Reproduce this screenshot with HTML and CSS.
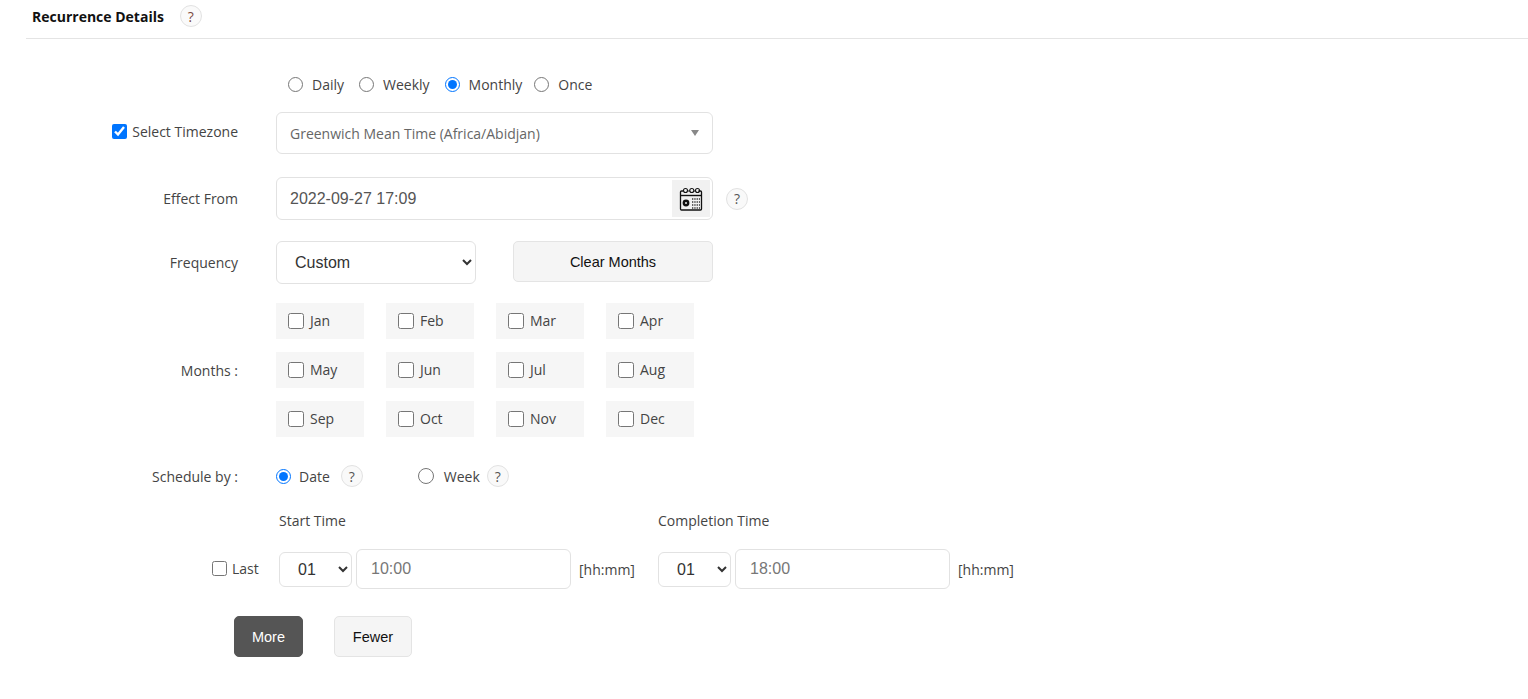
FILE: index.html
```html
<!DOCTYPE html>
<html lang="en">
<head>
<meta charset="utf-8">
<title>Recurrence Details</title>
<link rel="stylesheet" href="styles.css">
</head>
<body>
<header class="section-head">
  <h2 class="section-title">Recurrence Details</h2>
  <span class="help help-head">?</span>
</header>
<form class="form">
  <div class="row row-type">
    <div class="label"></div>
    <div class="field radios">
      <label class="opt"><input type="radio" name="type"><span>Daily</span></label>
      <label class="opt"><input type="radio" name="type"><span>Weekly</span></label>
      <label class="opt"><input type="radio" name="type" checked><span>Monthly</span></label>
      <label class="opt"><input type="radio" name="type"><span>Once</span></label>
    </div>
  </div>
  <div class="row row-tz">
    <div class="label"><label class="opt opt-tz"><input type="checkbox" checked><span>Select Timezone</span></label></div>
    <div class="field">
      <div class="combo"><span>Greenwich Mean Time (Africa/Abidjan)</span><i class="caret"></i></div>
    </div>
  </div>
  <div class="row row-from">
    <div class="label">Effect From</div>
    <div class="field">
      <div class="date">
        <span class="date-value">2022-09-27 17:09</span>
        <span class="cal">
          <svg width="26" height="26" viewBox="0 0 26 26" fill="none" stroke="#111">
            <path d="M5.5 5H3.5a1 1 0 0 0-1 1v17a1 1 0 0 0 1 1h19a1 1 0 0 0 1-1V6a1 1 0 0 0-1-1h-2" stroke-width="1.3"/>
            <path d="M2.5 9.5h21" stroke-width="1.4"/>
            <path d="M9.5 5h2.5M16 5h1.5" stroke-width="1.2"/>
            <circle cx="7.5" cy="4.5" r="2" stroke-width="1.1"/>
            <circle cx="13.8" cy="4.5" r="2" stroke-width="1.1"/>
            <circle cx="19.5" cy="4.5" r="2" stroke-width="1.1"/>
            <circle cx="8" cy="17" r="3.4" fill="#111" stroke="none"/>
            <path d="M7 16l2 2M9 16l-2 2" stroke="#ddd" stroke-width=".8"/>
            <path d="M14 13h8M14 16h8M14 19h8M14 22h8" stroke="#333" stroke-width="1.3" stroke-dasharray="1.3 1"/>
          </svg>
        </span>
      </div>
      <span class="help help-from">?</span>
    </div>
  </div>
  <div class="row row-freq">
    <div class="label">Frequency</div>
    <div class="field">
      <select class="select select-freq"><option>Custom</option></select>
      <button type="button" class="btn btn-clear">Clear Months</button>
    </div>
  </div>
  <div class="row row-months">
    <div class="label">Months :</div>
    <div class="months">
      <label class="month"><input type="checkbox"><span>Jan</span></label>
      <label class="month"><input type="checkbox"><span>Feb</span></label>
      <label class="month"><input type="checkbox"><span>Mar</span></label>
      <label class="month"><input type="checkbox"><span>Apr</span></label>
      <label class="month"><input type="checkbox"><span>May</span></label>
      <label class="month"><input type="checkbox"><span>Jun</span></label>
      <label class="month"><input type="checkbox"><span>Jul</span></label>
      <label class="month"><input type="checkbox"><span>Aug</span></label>
      <label class="month"><input type="checkbox"><span>Sep</span></label>
      <label class="month"><input type="checkbox"><span>Oct</span></label>
      <label class="month"><input type="checkbox"><span>Nov</span></label>
      <label class="month"><input type="checkbox"><span>Dec</span></label>
    </div>
  </div>
  <div class="row row-sched">
    <div class="label">Schedule by :</div>
    <div class="field">
      <label class="opt opt-date"><input type="radio" name="by" checked><span>Date</span></label>
      <span class="help">?</span>
      <label class="opt opt-week"><input type="radio" name="by"><span>Week</span></label>
      <span class="help">?</span>
    </div>
  </div>
  <div class="times-head">
    <span class="time-title">Start Time</span>
    <span class="time-title">Completion Time</span>
  </div>
  <div class="times">
    <label class="opt opt-last"><input type="checkbox"><span>Last</span></label>
    <div class="time-group">
      <select class="select select-day"><option>01</option></select>
      <div class="time-input">10:00</div>
      <span class="hint">[hh:mm]</span>
    </div>
    <div class="time-group">
      <select class="select select-day"><option>01</option></select>
      <div class="time-input">18:00</div>
      <span class="hint">[hh:mm]</span>
    </div>
  </div>
  <div class="actions">
    <button type="button" class="btn btn-more">More</button>
    <button type="button" class="btn btn-fewer">Fewer</button>
  </div>
</form>
</body>
</html>
```
FILE: styles.css
```css
* { box-sizing: border-box; }
html, body { margin: 0; padding: 0; background: #fff; }
body {
  width: 1528px;
  height: 699px;
  overflow: hidden;
  font-family: "Open Sans", "Liberation Sans", sans-serif;
  font-size: 14px;
  color: #444;
}
.section-head {
  display: flex;
  align-items: center;
  height: 39px;
  margin-left: 26px;
  padding: 0 0 6px 6px;
  border-bottom: 1px solid #e4e4e4;
}
.section-title {
  margin: 0;
  font-size: 14px;
  font-weight: 700;
  color: #111;
}
.help {
  display: inline-flex;
  align-items: center;
  justify-content: center;
  width: 22px;
  height: 22px;
  border: 1px solid #e2e2e2;
  border-radius: 50%;
  background: #f9f9f9;
  font-size: 14px;
  color: #555;
}
.help-head { margin-left: 16px; background: #fafafa; color: #7a4a42; }
.form { display: block; }
.row { display: flex; }
.label {
  width: 238px;
  flex: none;
  text-align: right;
  color: #444;
}
.field {
  display: flex;
  align-items: center;
  margin-left: 38px;
}
.opt { display: inline-flex; align-items: center; }
.opt input { margin: 0; width: 15px; height: 15px; flex: none; }
.row-type { margin-top: 33px; height: 24px; align-items: center; }
.radios { margin-left: 50px; }
.radios .opt { margin-right: 15px; }
.radios .opt span { margin-left: 9px; }
.radios .opt:nth-child(3) { margin-right: 12px; }
.row-tz { margin-top: 16px; align-items: center; height: 42px; }
.opt-tz { justify-content: flex-end; transform: none; color: #444; }
.opt-tz span { margin-left: 5px; }
.opt-tz { margin-top: -2px; }
.combo {
  display: flex;
  align-items: center;
  justify-content: space-between;
  width: 437px;
  height: 42px;
  padding: 0 13px 0 13px;
  border: 1px solid #e2e2e2;
  border-radius: 6px;
  color: #666;
}
.caret {
  width: 0;
  height: 0;
  border-left: 4px solid transparent;
  border-right: 4px solid transparent;
  border-top: 6px solid #888;
  margin-top: -1px;
}
.row-from { margin-top: 23px; height: 43px; align-items: center; }
.date {
  display: flex;
  align-items: center;
  justify-content: space-between;
  width: 437px;
  height: 43px;
  padding: 0 2px 0 13px;
  border: 1px solid #e2e2e2;
  border-radius: 6px;
}
.date-value {
  font-family: "Liberation Sans", Arial, sans-serif;
  font-size: 16px;
  color: #555;
}
.cal {
  display: flex;
  align-items: center;
  justify-content: center;
  width: 38px;
  height: 37px;
  background: #f1f1f1;
  margin-top: 0;
}
.help-from { margin-left: 13px; }
.row-freq { margin-top: 21px; height: 43px; align-items: center; }
.row-freq .label { margin-top: -1px; }
.select {
  font-family: "Liberation Sans", Arial, sans-serif;
  font-size: 16px;
  color: #333;
  background-color: #fff;
  border: 1px solid #e2e2e2;
  border-radius: 6px;
}
.select-freq {
  width: 200px;
  height: 43px;
  padding: 0 14px;
}
.btn {
  font-family: "Liberation Sans", Arial, sans-serif;
  font-size: 14.5px;
  color: #111;
  background: #f5f5f5;
  border: 1px solid #e4e4e4;
  border-radius: 5px;
  padding: 0;
}
.btn-clear {
  width: 200px;
  height: 41px;
  margin: -2px 0 0 37px;
}
.row-months { margin-top: 19px; align-items: center; }
.months {
  display: grid;
  grid-template-columns: repeat(4, 88px);
  grid-auto-rows: 36px;
  column-gap: 22px;
  row-gap: 13px;
  margin-left: 38px;
}
.month {
  display: flex;
  align-items: center;
  padding-left: 12px;
  background: #f6f6f6;
  color: #444;
}
.month input { margin: 0; width: 16px; height: 16px; flex: none; }
.month span { margin: -2px 0 0 6px; }
.row-sched { margin-top: 26px; height: 26px; align-items: center; }
.opt-date input { width: 15px; height: 15px; }
.opt-date span { margin-left: 8px; }
.opt-date { margin-right: 11px; }
.opt-week { margin: 0 7px 0 55px; }
.opt-week input { width: 16px; height: 16px; }
.opt-week span { margin-left: 10px; }
.times-head {
  display: flex;
  margin-top: 22px;
  padding-left: 279px;
  height: 20px;
  line-height: 20px;
}
.time-title { width: 379px; color: #444; }
.times {
  display: flex;
  align-items: center;
  margin-top: 18px;
  height: 40px;
  padding-left: 212px;
}
.opt-last { width: 67px; margin-top: -2px; }
.opt-last span { margin-left: 5px; }
.time-group { display: flex; align-items: center; width: 379px; }
.select-day {
  width: 73px;
  height: 35px;
  padding: 0 10px 0 14px;
}
.time-input {
  display: flex;
  align-items: center;
  width: 215px;
  height: 40px;
  margin-left: 4px;
  padding-left: 14px;
  border: 1px solid #e2e2e2;
  border-radius: 6px;
  font-family: "Liberation Sans", Arial, sans-serif;
  font-size: 16px;
  color: #777;
}
.hint { margin-left: 8px; color: #444; }
.actions {
  display: flex;
  margin-top: 27px;
  padding-left: 234px;
}
.btn-more {
  width: 69px;
  height: 41px;
  background: #555;
  border-color: #555;
  color: #fff;
}
.btn-fewer {
  width: 78px;
  height: 41px;
  margin-left: 31px;
}
```
